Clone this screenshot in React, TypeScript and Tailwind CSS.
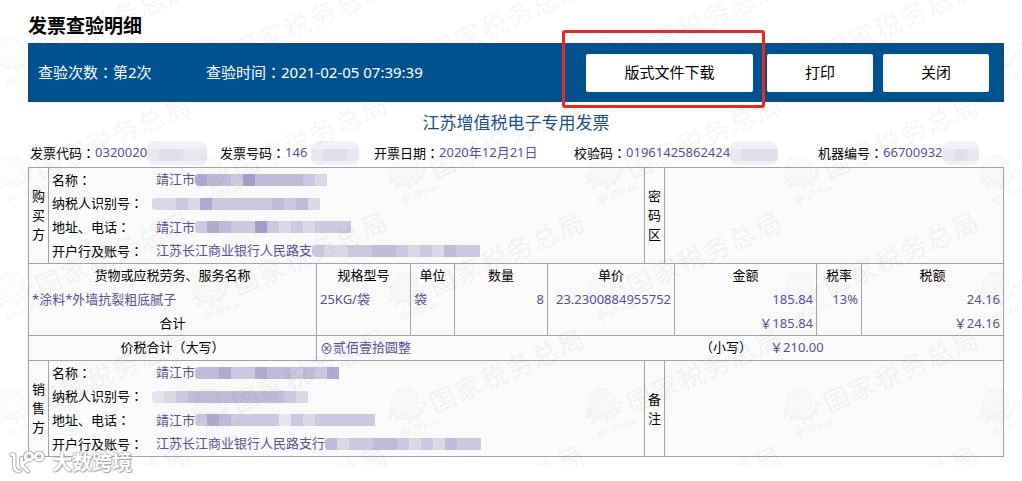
import type { ReactNode } from "react";

const FONT = "font-['Noto_Sans','Noto_Sans_CJK_SC',sans-serif]";

const SHADES = [
  "bg-[#e6e4ee]",
  "bg-[#dad8e7]",
  "bg-[#cbc8df]",
  "bg-[#bfbbd8]",
  "bg-[#b0aacf]",
  "bg-[#a19cc8]",
];

// full-width punctuation, centred in its square
function Mark({ children }: { children: string }) {
  return <span className="font-['Noto_Sans_CJK_TC',sans-serif]">{children}</span>;
}

// masked text, one digit per block: the index of its shade
function Mosaic({ cells }: { cells: string }) {
  return (
    <span className="flex overflow-hidden rounded-l-sm" aria-hidden="true">
      {cells.split("").map((c, i) => (
        <span key={i} className={`h-3 w-3 ${SHADES[Number(c)]}`} />
      ))}
    </span>
  );
}

function Smudge({ cells }: { cells: string }) {
  return (
    <span className="flex h-6 overflow-hidden rounded-lg bg-[#f2f1f8]" aria-hidden="true">
      {cells.split("").map((c, i) => (
        <span key={i} className={`mt-2 h-3 w-3 ${SHADES[Number(c)]} opacity-70`} />
      ))}
    </span>
  );
}

const META = [
  { label: "发票代码", value: "0320020", mask: "01100" },
  { label: "发票号码", value: "146", mask: "0110", gap: true },
  { label: "开票日期", value: "2020年12月21日" },
  { label: "校验码", value: "01961425862424", mask: "0111" },
  { label: "机器编号", value: "66700932", mask: "010" },
];

const BUYER = [
  { label: "名称", value: "靖江市", mask: "43325333321" },
  { label: "纳税人识别号", value: "", mask: "11214222223231" },
  { label: "地址、电话", value: "靖江市", mask: "2432252121222" },
  { label: "开户行及账号", value: "江苏长江商业银行人民路支", mask: "21122332121322" },
];

const SELLER = [
  { label: "名称", value: "靖江市", mask: "334224332324" },
  { label: "纳税人识别号", value: "", mask: "0123333333321" },
  { label: "地址、电话", value: "靖江市", mask: "243222202122222" },
  { label: "开户行及账号", value: "江苏长江商业银行人民路支行", mask: "3122332121322" },
];

function Party({ rows }: { rows: typeof BUYER }) {
  return (
    <dl className="grid h-[95px] grid-rows-4 px-[3px]">
      {rows.map((row) => (
        <div key={row.label} className="flex items-center whitespace-nowrap">
          <dt className="w-25 shrink-0">
            {row.label}
            <Mark>：</Mark>
          </dt>
          <dd className="flex items-center text-[#584f98]">
            {row.value && <span className="pl-1">{row.value}</span>}
            <Mosaic cells={row.mask} />
          </dd>
        </div>
      ))}
    </dl>
  );
}

function Side({ text }: { text: string }) {
  return (
    <th scope="row" className="border border-[#a3a3a3] p-0 font-normal">
      <span className="flex flex-col items-center leading-[19px]">
        {text.split("").map((c) => (
          <span key={c}>{c}</span>
        ))}
      </span>
    </th>
  );
}

const COLS = ["w-5", "w-67", "w-[94px]", "w-11", "w-[93px]", "w-[97px]", "w-5", "w-[10px]", "w-[142px]", "w-[45px]", "w-[142px]"];

function Head({ children, span = 1 }: { children: ReactNode; span?: number }) {
  return (
    <th scope="col" colSpan={span} className="h-6 border-x border-t border-[#a3a3a3] p-0 font-normal">
      {children}
    </th>
  );
}

function Cell({ children, span = 1, right = false }: { children?: ReactNode; span?: number; right?: boolean }) {
  return (
    <td
      colSpan={span}
      className={`h-6 border-x border-[#a3a3a3] px-[3px] py-0 whitespace-nowrap text-[#584f98] ${right ? "text-right" : "text-left"}`}
    >
      {children}
    </td>
  );
}

function Emblem() {
  return (
    <g fill="none" stroke="#777777">
      <circle r="13" fill="#777777" fillOpacity="0.5" strokeWidth="2" strokeDasharray="3 1" />
      <path d="M-13 -5q6 -4 11 0t12 -2M-13 1q7 -3 12 1t13 -1M-10 7q6 -3 10 0t10 -1" strokeWidth="1" stroke="#ffffff" />
      <path d="M-15 6q4 11 14 10M-12 12l-4 4M-7 16l-3 5M4 18q11 -3 14 -14M13 8l6 2M9 13l5 4M4 17l2 5M16 1l5 1M-3 15q4 4 8 -1" strokeWidth="3" />
      <path d="M-4 32l8 -4M-1 24l3 14M-4 29l1 5 8 -4 -1 -4M9 24l1 9M9 24l5 -2 -2 8M16 22l-1 7M19 21l1 6M23 20l-3 5M25 24l4 -3M27 18l1 6M32 17l-2 5 4 -2" strokeWidth="1.5" />
    </g>
  );
}

// repeated tax bureau mark over the whole sheet
function Watermark() {
  const marks = [];
  for (let row = 0; row < 5; row++) {
    for (let col = 0; col < 6; col++) {
      // the last column has room for the first character only, the last row for the final three
      const chars = "国家税务总局".split("").map((c, i) => ({ c, i }));
      marks.push({
        x: 11 + col * 197,
        y: 51 + row * 117,
        chars: chars.filter(({ i }) => (col < 5 || i === 0) && (row < 4 || i > 2)),
      });
    }
  }
  return (
    <svg className="pointer-events-none absolute inset-x-0 top-0 h-[466px] w-full opacity-5" aria-hidden="true">
      {marks.map(({ x, y, chars }) => (
        <g key={`${x}-${y}`} transform={`translate(${x} ${y})`}>
          <Emblem />
          <g transform="translate(38 -2) rotate(-24)" fill="#555555" fontSize="26">
            {chars.map(({ c, i }) => (
              <text key={c} x={i * 28 - 13} y="9" className={FONT}>
                {c}
              </text>
            ))}
          </g>
        </g>
      ))}
    </svg>
  );
}

const BUTTON = "h-[38px] rounded-[2px] bg-white text-[15px] text-black";

export default function App() {
  return (
    <div className={`relative overflow-hidden bg-white pt-3 pr-[18px] pb-6 pl-7 text-[13px] text-black ${FONT}`}>
      <h1 className="h-[31px] text-[19px] leading-7 font-bold">发票查验明细</h1>

      <header className="relative z-10 flex h-[59px] items-center border border-[#21476b] bg-[#00528f] pr-[14px] pl-[9px] text-[15px] text-white">
        <p className="w-42 shrink-0">
          查验次数
          <Mark>：</Mark>
          第2次
        </p>
        <p className="flex-1 whitespace-nowrap">
          查验时间
          <Mark>：</Mark>
          2021-02-05 07:39:39
        </p>
        <div className="flex gap-[10px]">
          <div className="relative mr-1">
            <button type="button" className={`${BUTTON} w-[167px]`}>
              版式文件下载
            </button>
            <span className="absolute -top-6 -right-3 -bottom-4 -left-6 rounded-[3px] border-3 border-[#e62b22]" />
          </div>
          <button type="button" className={`${BUTTON} w-[106px]`}>
            打印
          </button>
          <button type="button" className={`${BUTTON} w-[106px]`}>
            关闭
          </button>
        </div>
      </header>

      <h2 className="h-10 text-center text-[17px] leading-[42px] text-[#1b4f8c]">江苏增值税电子专用发票</h2>

      <ul className="grid h-[25px] grid-cols-[190fr_154fr_200fr_244fr_186fr] pl-[2px] whitespace-nowrap">
        {META.map((item) => (
          <li key={item.label} className="flex h-[22px] items-center">
            <span>
              {item.label}
              <Mark>：</Mark>
            </span>
            <span className={`text-[#584f98] ${item.gap ? "mr-1" : ""}`}>{item.value}</span>
            {item.mask && <Smudge cells={item.mask} />}
          </li>
        ))}
      </ul>

      <table className="w-full table-fixed border-collapse border border-[#a3a3a3] bg-[#fafafa]">
        <colgroup>
          {COLS.map((w, i) => (
            <col key={i} className={w} />
          ))}
        </colgroup>
        <tbody>
          <tr>
            <Side text="购买方" />
            <td colSpan={5} className="p-0">
              <Party rows={BUYER} />
            </td>
            <Side text="密码区" />
            <td colSpan={4} />
          </tr>
          <tr>
            <Head span={2}>货物或应税劳务、服务名称</Head>
            <Head>规格型号</Head>
            <Head>单位</Head>
            <Head>数量</Head>
            <Head span={3}>单价</Head>
            <Head>金额</Head>
            <Head>税率</Head>
            <Head>税额</Head>
          </tr>
          <tr>
            <Cell span={2}>*涂料*外墙抗裂粗底腻子</Cell>
            <Cell>25KG/袋</Cell>
            <Cell>袋</Cell>
            <Cell right>8</Cell>
            <Cell span={3} right>
              23.2300884955752
            </Cell>
            <Cell right>185.84</Cell>
            <Cell right>13%</Cell>
            <Cell right>24.16</Cell>
          </tr>
          <tr>
            <td colSpan={2} className="h-6 p-0 text-center">
              合计
            </td>
            <Cell />
            <Cell />
            <Cell />
            <Cell span={3} />
            <Cell right>￥185.84</Cell>
            <Cell />
            <Cell right>￥24.16</Cell>
          </tr>
          <tr className="border-y border-[#a3a3a3]">
            <th scope="row" colSpan={2} className="h-[25px] border-r border-[#a3a3a3] p-0 font-normal">
              价税合计（大写）
            </th>
            <td colSpan={9} className="p-0">
              <div className="flex px-[3px]">
                <span className="flex flex-1 items-center text-[#584f98]">
                  <span className="font-['Noto_Sans_CJK_SC',sans-serif]">⊗</span>
                  贰佰壹拾圆整
                </span>
                <span className="w-[70px]">（小写）</span>
                <span className="w-[230px] text-[#584f98]">￥210.00</span>
              </div>
            </td>
          </tr>
          <tr>
            <Side text="销售方" />
            <td colSpan={5} className="p-0">
              <Party rows={SELLER} />
            </td>
            <Side text="备注" />
            <td colSpan={4} />
          </tr>
        </tbody>
      </table>

      <Watermark />

      <div className="absolute bottom-0 left-2 flex h-9 items-center gap-1">
        <svg viewBox="0 0 40 26" className="h-6 w-10" fill="none" strokeLinecap="round" strokeLinejoin="round" aria-hidden="true">
          {["stroke-[#aaaaaa] stroke-5", "stroke-white stroke-3"].map((line) => (
            <g key={line} className={line}>
              <path d="M2 4h3v12q0 6 6 6M20 9l-7 6 7 7M13 8v8" />
              <circle cx="21" cy="6" r="4" />
              <circle cx="32" cy="6" r="4" />
            </g>
          ))}
        </svg>
        <span className="text-[20px] leading-6 font-bold text-white [text-shadow:0_0_1px_#999999,0_0_2px_#999999,1px_1px_1px_#aaaaaa]">
          大数跨境
        </span>
      </div>
    </div>
  );
}
